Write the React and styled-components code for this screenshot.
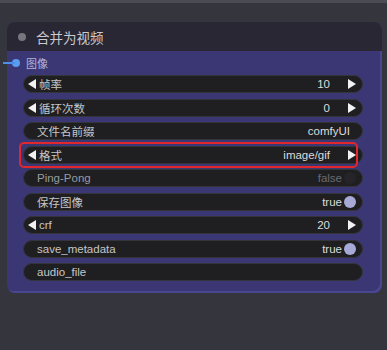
import React from "react";
import styled, { createGlobalStyle } from "styled-components";

const GlobalStyle = createGlobalStyle`
  body {
    margin: 0;
    background: #35353e;
    font-family: "Liberation Sans", "Noto Sans CJK SC", sans-serif;
  }
`;

const Page = styled.div`
  width: 387px;
  height: 350px;
  background: #35353e;
  overflow: hidden;
`;

const TopStrip = styled.div`
  height: 3px;
  background: #4b4b54;
`;

const Node = styled.div`
  position: relative;
  margin: 19px 0 0 7px;
  width: 375px;
  border-radius: 8px;
  background: #3b3774;
  box-shadow: inset -2px -2px 0 #4a4690;
`;

const TitleBar = styled.div`
  display: flex;
  align-items: center;
  gap: 10px;
  height: 29px;
  padding-left: 11px;
  background: #282733;
  border-radius: 8px 8px 0 0;
  color: #c9c9cf;
  font-size: 13.5px;
`;

const Dot = styled.span`
  width: 8px;
  height: 8px;
  border-radius: 50%;
  background: ${(p) => p.color};
  flex: none;
`;

const Body = styled.div`
  padding: 5px 19px 12px 16px;
`;

const InputRow = styled.div`
  position: relative;
  display: flex;
  align-items: center;
  gap: 6px;
  height: 14px;
  margin: 0 0 5px -11px;
  color: #b5b3d8;
  font-size: 11px;
`;

const Wire = styled.span`
  position: absolute;
  left: -9px;
  top: 6px;
  width: 12px;
  height: 2px;
  background: #4d8ee6;
`;

const Widgets = styled.div`
  display: flex;
  flex-direction: column;
  gap: 5.5px;
`;

const Row = styled.div`
  position: relative;
  display: flex;
  align-items: center;
  height: 18px;
  padding: 0 6px 0 ${(p) => (p.$arrows ? "4px" : "13px")};
  background: #1f1f22;
  border: 1px solid #34343b;
  border-radius: 10px;
  box-sizing: border-box;
  font-size: 11.5px;
  color: ${(p) => (p.$dim ? "#9a9a9e" : "#c6c6c6")};
`;

const Label = styled.span`
  flex: 1;
  white-space: nowrap;
`;

const Value = styled.span`
  margin-right: ${(p) => p.$gap || 0}px;
  color: ${(p) => (p.$dim ? "#6a6a6f" : "#dcdcdc")};
`;

const Arrow = styled.span`
  width: 0;
  height: 0;
  border-top: 5px solid transparent;
  border-bottom: 5px solid transparent;
  ${(p) =>
    p.$left
      ? "border-right: 8px solid #f2f2f2; margin-right: 3px;"
      : "border-left: 8px solid #f2f2f2;"}
  flex: none;
`;

const Toggle = styled.span`
  width: 12px;
  height: 12px;
  border-radius: 50%;
  margin-left: 2px;
  background: ${(p) => (p.$on ? "#a7aad6" : "#252529")};
  flex: none;
`;

const Highlight = styled.div`
  position: absolute;
  left: -5px;
  right: 4px;
  top: -5px;
  bottom: -5px;
  border: 2.5px solid #e1262c;
  border-radius: 5px;
  pointer-events: none;
`;

const widgets = [
  { label: "帧率", value: "10", type: "number" },
  { label: "循环次数", value: "0", type: "number" },
  { label: "文件名前缀", value: "comfyUI", type: "text" },
  { label: "格式", value: "image/gif", type: "number", marked: true },
  { label: "Ping-Pong", value: "false", type: "toggle", dim: true },
  { label: "保存图像", value: "true", type: "toggle", on: true },
  { label: "crf", value: "20", type: "number" },
  { label: "save_metadata", value: "true", type: "toggle", on: true },
  { label: "audio_file", value: "", type: "text" },
];

const Widget = ({ w }) => {
  const arrows = w.type === "number";
  return (
    <Row $arrows={arrows} $dim={w.dim}>
      {arrows && <Arrow $left />}
      <Label>{w.label}</Label>
      {arrows && (
        <>
          <Value $gap={18}>{w.value}</Value>
          <Arrow />
        </>
      )}
      {w.type === "text" && <Value $gap={6}>{w.value}</Value>}
      {w.type === "toggle" && (
        <>
          <Value $dim={w.dim}>{w.value}</Value>
          <Toggle $on={w.on} />
        </>
      )}
      {w.marked && <Highlight />}
    </Row>
  );
};

export default function App() {
  return (
    <Page>
      <GlobalStyle />
      <TopStrip />
      <Node>
        <TitleBar>
          <Dot color="#77767e" />
          合并为视频
        </TitleBar>
        <Body>
          <InputRow>
            <Wire />
            <Dot color="#5a9cf0" />
            图像
          </InputRow>
          <Widgets>
            {widgets.map((w) => (
              <Widget key={w.label} w={w} />
            ))}
          </Widgets>
        </Body>
      </Node>
    </Page>
  );
}
